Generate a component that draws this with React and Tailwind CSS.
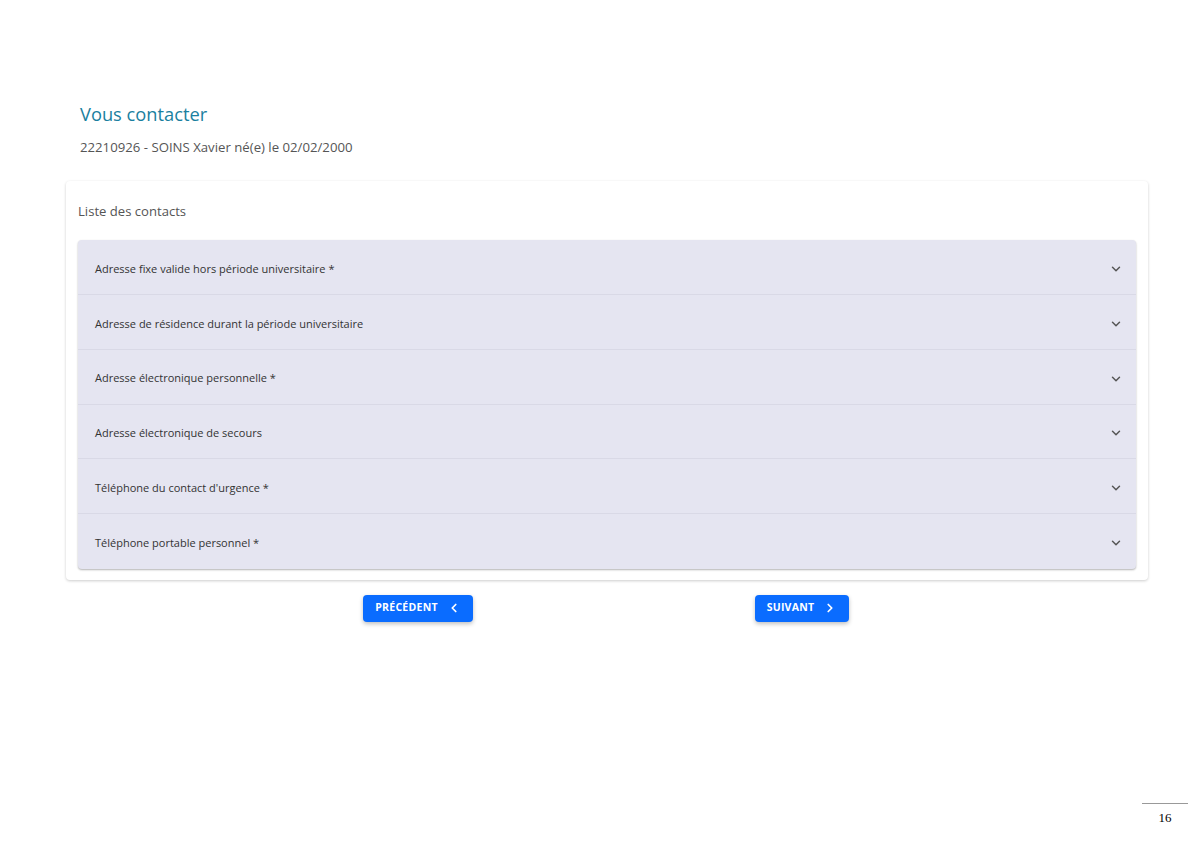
import React from "react";
import { ChevronDown, ChevronLeft, ChevronRight } from "lucide-react";

const contacts = [
  "Adresse fixe valide hors période universitaire *",
  "Adresse de résidence durant la période universitaire",
  "Adresse électronique personnelle *",
  "Adresse électronique de secours",
  "Téléphone du contact d'urgence *",
  "Téléphone portable personnel *",
];

const ContactRow = ({ label, last }) => (
  <div
    className={
      "flex h-[54.7px] items-center justify-between pl-[17px] pr-[13px] pt-[4px] " +
      (last ? "" : "border-b border-[#d9d9e6]")
    }>
    <span className="text-[11px] text-[#333]">{label}</span>
    <ChevronDown size={14} strokeWidth={2.5} className="text-[#555]" />
  </div>
);

const NavButton = ({ children }) => (
  <button className="flex h-[27px] items-center gap-[9px] rounded-[4px] bg-[#0a6cff] px-[12px] text-[10.5px] font-bold tracking-wide text-white shadow-[0_2px_4px_rgba(0,0,0,0.25)]">
    {children}
  </button>
);

export default function App() {
  return (
    <div
      className="relative h-[848px] w-[1200px] bg-white"
      style={{ fontFamily: '"Open Sans", "Noto Sans", sans-serif' }}>
      <div className="pl-[66px] pr-[52px] pt-[100px]">
        <h1 className="pl-[14px] text-[18.3px] leading-[28px] text-[#1a7fa0]">
          Vous contacter
        </h1>
        <p className="mt-[10px] pl-[14px] text-[13.2px] text-[#555]">
          22210926 - SOINS Xavier né(e) le 02/02/2000
        </p>

        <div className="mt-[23px] rounded-[4px] bg-white px-[12px] pb-[11px] pt-[21px] shadow-[0_1px_3px_rgba(0,0,0,0.2)]">
          <div className="text-[13.1px] text-[#555]">Liste des contacts</div>
          <div className="mt-[19px] rounded-[4px] bg-[#e5e5f1] shadow-[0_1px_2px_rgba(0,0,0,0.3)]">
            {contacts.map((c, i) => (
              <ContactRow key={c} label={c} last={i === contacts.length - 1} />
            ))}
          </div>
        </div>

        <div className="ml-[160px] mt-[15px] grid w-[768px] grid-cols-2 justify-items-center">
          <NavButton>
            PRÉCÉDENT
            <ChevronLeft size={14} strokeWidth={3} />
          </NavButton>
          <NavButton>
            SUIVANT
            <ChevronRight size={14} strokeWidth={3} />
          </NavButton>
        </div>
      </div>

      <div className="absolute left-[1142px] top-[803px] w-[46px] border-t border-[#999] text-center">
        <span
          className="text-[13px] leading-[22px] text-black"
          style={{ fontFamily: '"Liberation Serif", serif' }}>
          16
        </span>
      </div>
    </div>
  );
}
